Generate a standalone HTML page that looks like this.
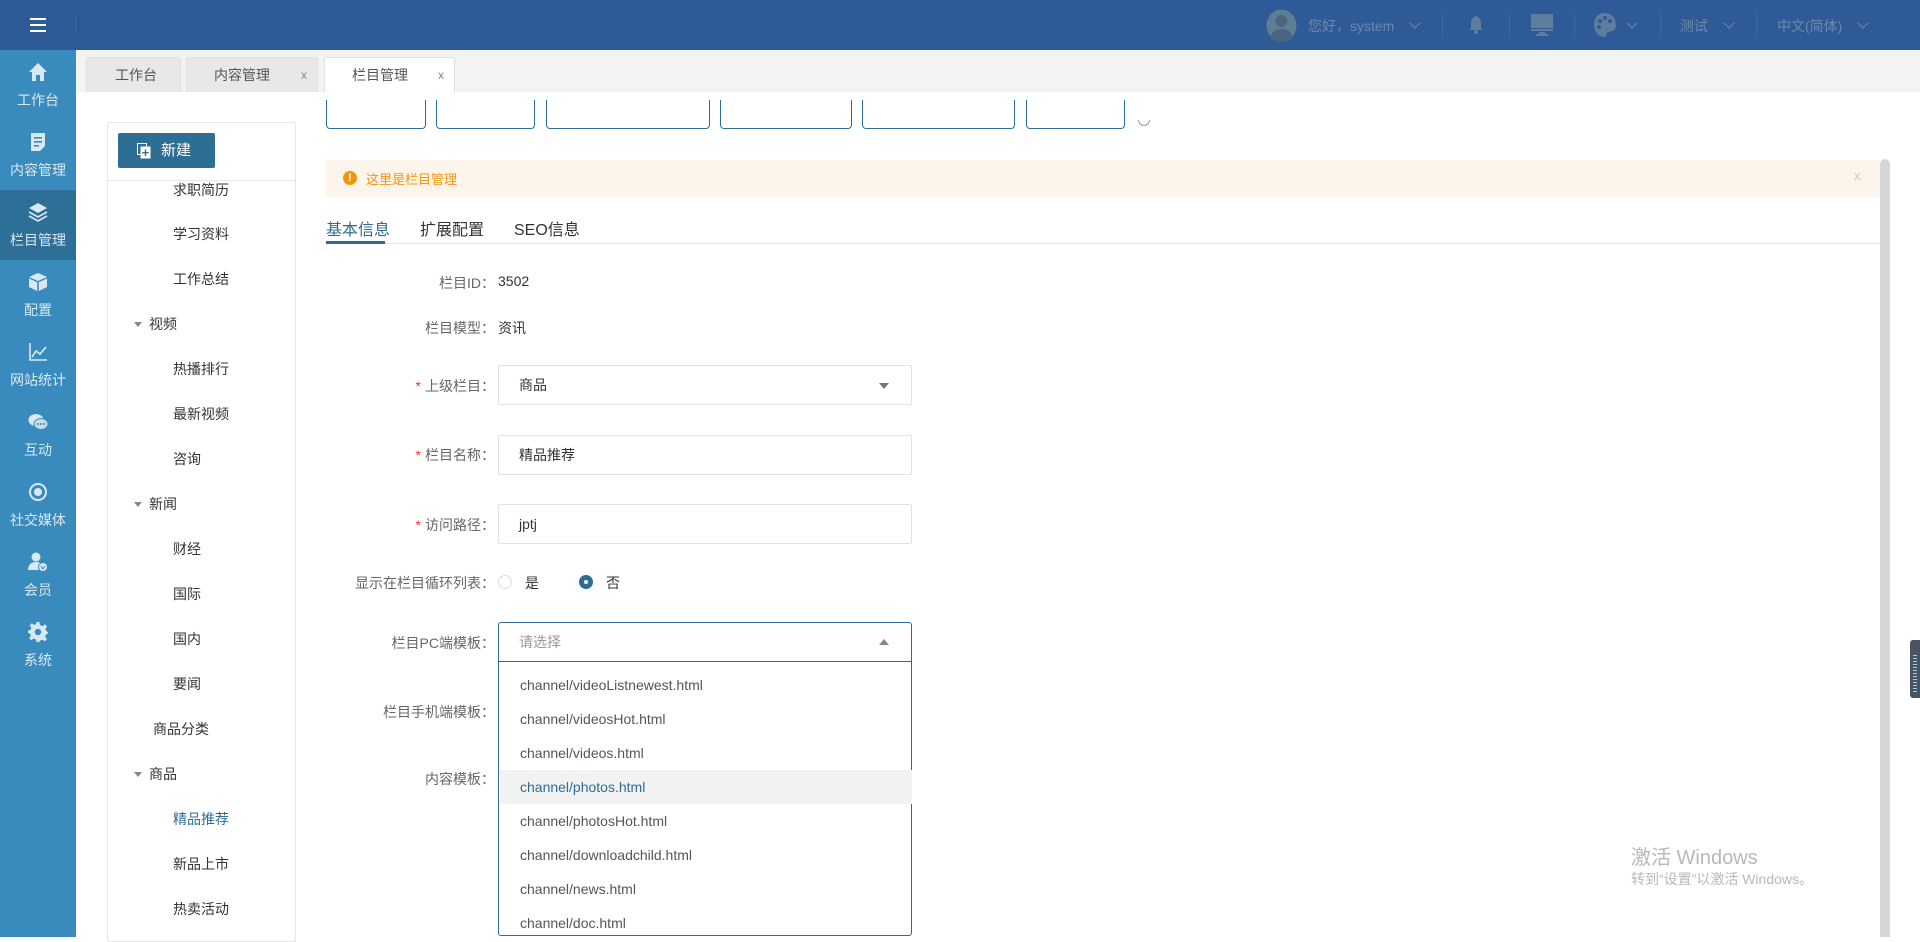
<!DOCTYPE html>
<html><head><meta charset="utf-8">
<style>
*{margin:0;padding:0;box-sizing:border-box}
body{width:1920px;height:937px;overflow:hidden;position:relative;background:#fff;font-family:"Liberation Sans","Noto Sans CJK SC",sans-serif;font-size:14px;color:#333}
.abs{position:absolute}
#hd{left:0;top:0;width:1920px;height:50px;background:#2e5a97}
.hdt{color:#6f88aa;font-size:14px;top:16px;position:absolute}
.sep{position:absolute;top:13px;width:1px;height:24px;background:#3e69a3}
.chev{position:absolute;top:19px;width:8px;height:8px;border-right:1px solid #6f88aa;border-bottom:1px solid #6f88aa;transform:rotate(45deg)}
#sb{left:0;top:50px;width:76px;height:887px;background:#3a8bbd}
.si{position:absolute;left:0;width:76px;height:70px;color:#d9e9f3;text-align:center}
.si svg{position:absolute;left:28px;top:12px}
.si span{position:absolute;left:0;right:0;top:40px;font-size:14px}
.si.act{background:#2e6f97}
#tabs{left:76px;top:50px;width:1844px;height:42px;background:#f3f3f3}
.tab{position:absolute;top:7px;height:35px;background:#e8e8e8;border:1px solid #e0e0e0;border-bottom:none;border-radius:3px 3px 0 0;font-size:14px;color:#555;line-height:34px}
.tab .x{position:absolute;right:10px;top:0;font-size:12px;color:#888}
.tree{font-size:14px;color:#333;position:absolute}
.lbl{position:absolute;right:1425px;font-size:14px;color:#666;text-align:right;white-space:nowrap}
.star{color:#e33;margin-right:4px}
.inp{position:absolute;left:498px;width:414px;height:40px;border:1px solid #e2e2e2;border-radius:2px;padding-left:20px;line-height:38px;color:#333}
.opt{position:absolute;left:1px;width:412px;height:34px;line-height:34px;padding-left:20px;color:#555}
.tri{position:absolute;right:22px;top:17px;width:0;height:0;border-left:5px solid transparent;border-right:5px solid transparent}
.pbtn{position:absolute;top:100px;height:29px;border:1px solid #2e6d94;border-top:none;border-radius:0 0 4px 4px}
</style></head><body>
<div id="hd" class="abs">
 <div class="abs" style="left:30px;top:18px;width:16px;height:2px;background:#fff;box-shadow:0 6px 0 #fff,0 12px 0 #fff"></div>
 <div class="abs" style="left:75px;top:15px;width:1px;height:20px;background:#3b66a0"></div>
 <svg class="abs" style="left:1266px;top:9px" width="31" height="33" viewBox="0 0 31 33"><ellipse cx="15.5" cy="16.5" rx="15" ry="16" fill="#607d96"/><circle cx="15.5" cy="12" r="6" fill="#4a6580"/><path d="M4 29 Q6 20 15.5 20 Q25 20 27 29 Q21 33 15.5 33 Q10 33 4 29Z" fill="#4a6580"/></svg>
 <div class="hdt" style="left:1308px">您好，system</div>
 <div class="chev" style="left:1411px"></div>
 <div class="sep" style="left:1442px"></div>
 <svg class="abs" style="left:1469px;top:16px" width="14" height="18" viewBox="0 0 14 18"><path d="M7 0C4 1 2 3 2 7V12L0 14H14L12 12V7C12 3 10 1 7 0Z" fill="#5f7d9c"/><circle cx="7" cy="16" r="2" fill="#5f7d9c"/></svg>
 <div class="sep" style="left:1509px"></div>
 <svg class="abs" style="left:1531px;top:14px" width="22" height="22" viewBox="0 0 22 22"><rect x="0" y="0" width="22" height="14" fill="#5f7d9c"/><rect x="0" y="15" width="22" height="2" fill="#5f7d9c"/><rect x="8" y="18" width="6" height="2" fill="#5f7d9c"/><rect x="5" y="20" width="12" height="2" fill="#5f7d9c"/></svg>
 <div class="sep" style="left:1574px"></div>
 <svg class="abs" style="left:1594px;top:13px" width="22" height="24" viewBox="0 0 22 24"><path d="M11 0C4 0 0 5 0 12C0 19 5 24 10 24C13 24 12 20 14 19C17 18 22 19 22 12C22 5 17 0 11 0Z" fill="#5f7d9c"/><circle cx="6" cy="8" r="2" fill="#2e5a97"/><circle cx="11" cy="5" r="2" fill="#2e5a97"/><circle cx="16" cy="8" r="2" fill="#2e5a97"/><circle cx="5" cy="14" r="2" fill="#2e5a97"/></svg>
 <div class="chev" style="left:1628px"></div>
 <div class="sep" style="left:1660px"></div>
 <div class="hdt" style="left:1680px">测试</div>
 <div class="chev" style="left:1725px"></div>
 <div class="sep" style="left:1756px"></div>
 <div class="hdt" style="left:1777px">中文(简体)</div>
 <div class="chev" style="left:1859px"></div>
</div>

<div id="sb" class="abs">
 <div class="si" style="top:0"><svg width="20" height="20" viewBox="0 0 20 20"><path d="M10 1L1 10H4V19H8V13H12V19H16V10H19Z" fill="#d9e9f3"/></svg><span>工作台</span></div>
 <div class="si" style="top:70px"><svg width="20" height="20" viewBox="0 0 20 20"><path d="M3 1H17V14L12 19H3Z" fill="#d9e9f3"/><rect x="6" y="5" width="8" height="1.6" fill="#3a8bbd"/><rect x="6" y="9" width="8" height="1.6" fill="#3a8bbd"/><rect x="6" y="13" width="5" height="1.6" fill="#3a8bbd"/></svg><span>内容管理</span></div>
 <div class="si act" style="top:140px"><svg width="20" height="20" viewBox="0 0 20 20"><path d="M10 1L19 6L10 11L1 6Z" fill="#d9e9f3"/><path d="M1 10L10 15L19 10M1 14L10 19L19 14" stroke="#d9e9f3" stroke-width="1.6" fill="none"/></svg><span>栏目管理</span></div>
 <div class="si" style="top:210px"><svg width="20" height="20" viewBox="0 0 20 20"><path d="M10 1L19 5L10 9L1 5Z" fill="#d9e9f3"/><path d="M1 6.5L9.2 10.3V19L1 15Z M10.8 10.3L19 6.5V15L10.8 19Z" fill="#d9e9f3"/></svg><span>配置</span></div>
 <div class="si" style="top:280px"><svg width="20" height="20" viewBox="0 0 20 20"><path d="M2 1V18H19" stroke="#d9e9f3" stroke-width="1.6" fill="none"/><path d="M4 15L8 9L12 12L18 5" stroke="#d9e9f3" stroke-width="1.6" fill="none"/></svg><span>网站统计</span></div>
 <div class="si" style="top:350px"><svg width="20" height="20" viewBox="0 0 20 20"><ellipse cx="8" cy="8" rx="7.5" ry="6" fill="#d9e9f3"/><ellipse cx="13" cy="12" rx="7" ry="5.5" fill="#c7dcea" stroke="#3a8bbd"/><circle cx="10" cy="12" r="1" fill="#3a8bbd"/><circle cx="13" cy="12" r="1" fill="#3a8bbd"/><circle cx="16" cy="12" r="1" fill="#3a8bbd"/></svg><span>互动</span></div>
 <div class="si" style="top:420px"><svg width="20" height="20" viewBox="0 0 20 20"><circle cx="10" cy="10" r="8" stroke="#d9e9f3" stroke-width="2" fill="none"/><circle cx="10" cy="10" r="4" fill="#d9e9f3"/></svg><span>社交媒体</span></div>
 <div class="si" style="top:490px"><svg width="20" height="20" viewBox="0 0 20 20"><circle cx="8" cy="5" r="4.5" fill="#d9e9f3"/><path d="M0 18C0 12 4 10 8 10C11 10 12 11 12 11V18Z" fill="#d9e9f3"/><circle cx="15" cy="15" r="4.5" fill="#d9e9f3" stroke="#3a8bbd"/><path d="M13 14L15 17L17 14" stroke="#3a8bbd" fill="none"/></svg><span>会员</span></div>
 <div class="si" style="top:560px"><svg width="20" height="20" viewBox="0 0 20 20"><path d="M8.5 0H11.5L12 3L14.5 4.2L17 2.3L19 4.5L17.4 7L18.3 9.2L20 10V11.5L18 12.5L17.2 14.7L18.8 17.3L16.8 19.3L14.3 17.7L12 18.7L11.5 20H8.5L8 17.5L5.7 16.5L3.2 18.2L1.2 16.2L2.9 13.6L2 11.5L0 11V8.5L2.5 8L3.3 5.8L1.7 3.3L3.7 1.3L6.2 2.9L8.2 2Z" fill="#d9e9f3"/><circle cx="10" cy="10" r="3.2" fill="#3a8bbd"/></svg><span>系统</span></div>
</div>

<div id="tabs" class="abs">
 <div class="tab" style="left:10px;width:95px;padding-left:28px">工作台</div>
 <div class="tab" style="left:110px;width:132px;padding-left:27px">内容管理<span class="x">x</span></div>
 <div class="tab" style="left:248px;width:131px;padding-left:27px;background:#fff;height:36px">栏目管理<span class="x">x</span></div>
</div>

<div class="abs" style="left:107px;top:122px;width:189px;height:820px;border:1px solid #e6e6e6;border-radius:2px"></div>
<div class="abs" style="left:118px;top:133px;width:97px;height:35px;background:#2e6d94;border-radius:2px;color:#fff;font-size:15px;line-height:35px;padding-left:43px">新建</div>
<svg class="abs" style="left:137px;top:143px" width="14" height="16" viewBox="0 0 14 16"><rect x="0.5" y="0.5" width="9" height="11" fill="none" stroke="#fff"/><rect x="3.5" y="3.5" width="10" height="12" fill="#fff"/><path d="M8.5 6.5V13M5.3 9.7H11.7" stroke="#2e6d94" stroke-width="1.4"/></svg>
<div class="abs" style="left:108px;top:180px;width:187px;height:1px;background:#e6e6e6"></div>
<div class="tree" style="left:173px;top:180px">求职简历</div>
<div class="tree" style="left:173px;top:224px">学习资料</div>
<div class="tree" style="left:173px;top:269px">工作总结</div>
<div class="tree" style="left:149px;top:314px">视频</div>
<div class="tree" style="left:173px;top:359px">热播排行</div>
<div class="tree" style="left:173px;top:404px">最新视频</div>
<div class="tree" style="left:173px;top:449px">咨询</div>
<div class="tree" style="left:149px;top:494px">新闻</div>
<div class="tree" style="left:173px;top:539px">财经</div>
<div class="tree" style="left:173px;top:584px">国际</div>
<div class="tree" style="left:173px;top:629px">国内</div>
<div class="tree" style="left:173px;top:674px">要闻</div>
<div class="tree" style="left:153px;top:719px">商品分类</div>
<div class="tree" style="left:149px;top:764px">商品</div>
<div class="tree" style="left:173px;top:809px;color:#2e6d94">精品推荐</div>
<div class="tree" style="left:173px;top:854px">新品上市</div>
<div class="tree" style="left:173px;top:899px">热卖活动</div>
<div class="abs" style="left:134px;top:322px;border-left:4px solid transparent;border-right:4px solid transparent;border-top:5px solid #888"></div>
<div class="abs" style="left:134px;top:502px;border-left:4px solid transparent;border-right:4px solid transparent;border-top:5px solid #888"></div>
<div class="abs" style="left:134px;top:772px;border-left:4px solid transparent;border-right:4px solid transparent;border-top:5px solid #888"></div>

<div class="pbtn" style="left:326px;width:100px"></div>
<div class="pbtn" style="left:436px;width:99px"></div>
<div class="pbtn" style="left:546px;width:164px"></div>
<div class="pbtn" style="left:720px;width:132px"></div>
<div class="pbtn" style="left:862px;width:153px"></div>
<div class="pbtn" style="left:1026px;width:99px"></div>
<div class="abs" style="left:1138px;top:114px;width:12px;height:12px;border-radius:50%;border:1px solid #999;clip-path:inset(50% 0 0 0)"></div>

<div class="abs" style="left:326px;top:160px;width:1554px;height:37px;background:#fdf5ec;border-radius:2px"></div>
<div class="abs" style="left:343px;top:171px;width:14px;height:14px;border-radius:50%;background:#f0960e;color:#fff;font-size:11px;font-weight:bold;text-align:center;line-height:14px">!</div>
<div class="abs" style="left:366px;top:169px;color:#f0960e;font-size:13px">这里是栏目管理</div>
<div class="abs" style="left:1854px;top:168px;color:#c8c8c8;font-size:13px">x</div>
<div class="abs" style="left:1880px;top:159px;width:10px;height:778px;background:#d6d6d6;border-radius:5px 5px 0 0"></div>
<div class="abs" style="left:1910px;top:640px;width:10px;height:58px;background:#4b5363;border-radius:3px 0 0 3px"></div>
<div class="abs" style="left:1913px;top:655px;width:4px;height:38px;background:repeating-linear-gradient(#8dd 0 1px,transparent 1px 3px)"></div>

<div class="abs" style="left:326px;top:216px;font-size:16px;color:#2e6d94">基本信息</div>
<div class="abs" style="left:420px;top:216px;font-size:16px;color:#333">扩展配置</div>
<div class="abs" style="left:514px;top:216px;font-size:16px;color:#333">SEO信息</div>
<div class="abs" style="left:326px;top:243px;width:1554px;height:1px;background:#e4e4e4"></div>
<div class="abs" style="left:326px;top:241px;width:59px;height:3px;background:#2e6d94"></div>

<div class="lbl" style="top:273px">栏目ID：</div><div class="abs" style="left:498px;top:273px">3502</div>
<div class="lbl" style="top:318px">栏目模型：</div><div class="abs" style="left:498px;top:318px">资讯</div>
<div class="lbl" style="top:376px"><span class="star">*</span>上级栏目：</div>
<div class="inp" style="top:365px">商品<div class="tri" style="border-top:6px solid #777;top:17px"></div></div>
<div class="lbl" style="top:445px"><span class="star">*</span>栏目名称：</div>
<div class="inp" style="top:435px">精品推荐</div>
<div class="lbl" style="top:515px"><span class="star">*</span>访问路径：</div>
<div class="inp" style="top:504px">jptj</div>
<div class="lbl" style="top:573px">显示在栏目循环列表：</div>
<div class="abs" style="left:498px;top:575px;width:14px;height:14px;border-radius:50%;border:1px solid #ddd"></div>
<div class="abs" style="left:525px;top:573px">是</div>
<div class="abs" style="left:579px;top:575px;width:14px;height:14px;border-radius:50%;background:#2e6d94"></div>
<div class="abs" style="left:584px;top:580px;width:4px;height:4px;border-radius:50%;background:#fff"></div>
<div class="abs" style="left:606px;top:573px">否</div>
<div class="lbl" style="top:633px">栏目PC端模板：</div>
<div class="lbl" style="top:702px">栏目手机端模板：</div>
<div class="lbl" style="top:769px">内容模板：</div>

<div class="abs" style="left:498px;top:622px;width:414px;height:314px;border:1px solid #2e6d94;border-radius:3px;background:#fff">
 <div style="position:absolute;left:0;top:0;width:412px;height:39px;border-bottom:1px solid #2e6d94;padding-left:20px;line-height:38px;color:#999">请选择</div>
 <div class="tri" style="border-bottom:6px solid #888;top:16px"></div>
 <div class="opt" style="top:45px">channel/videoListnewest.html</div>
 <div class="opt" style="top:79px">channel/videosHot.html</div>
 <div class="opt" style="top:113px">channel/videos.html</div>
 <div class="opt" style="top:147px;background:#f2f2f2;color:#2e6d94">channel/photos.html</div>
 <div class="opt" style="top:181px">channel/photosHot.html</div>
 <div class="opt" style="top:215px">channel/downloadchild.html</div>
 <div class="opt" style="top:249px">channel/news.html</div>
 <div class="opt" style="top:283px">channel/doc.html</div>
</div>

<div class="abs" style="left:1631px;top:841px;font-size:20px;color:#b8b8b8">激活 Windows</div>
<div class="abs" style="left:1631px;top:869px;font-size:14px;color:#b8b8b8">转到“设置”以激活 Windows。</div>
</body></html>
